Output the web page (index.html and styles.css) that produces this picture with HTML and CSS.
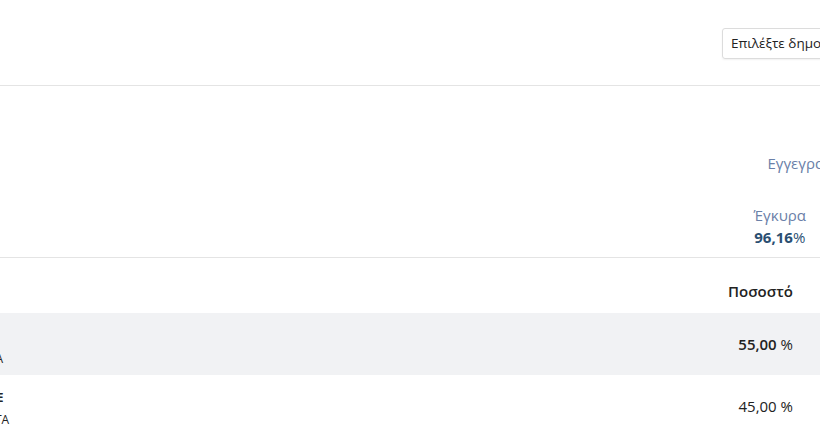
FILE: index.html
```html
<!DOCTYPE html>
<html lang="el">
<head>
<meta charset="utf-8">
<link rel="stylesheet" href="styles.css">
</head>
<body>
<div class="page">
  <header class="topbar">
    <div class="select">Επιλέξτε δημοτική ενότητα</div>
  </header>
  <section class="stats">
    <div class="stat-row first">
      <div class="stat"><span class="label">Εγγεγραμμένοι</span></div>
    </div>
    <div class="stat-row second">
      <div class="stat"><span class="label">Έγκυρα</span><span class="value">96,16<small>%</small></span></div>
    </div>
  </section>
  <table class="results">
    <thead>
      <tr><th class="name"></th><th class="pct">Ποσοστό</th></tr>
    </thead>
    <tbody>
      <tr class="alt">
        <td class="name"><div class="cand one"><span class="sub">ΚΑΤΑ</span></div></td>
        <td class="pct"><b>55,00</b> %</td>
      </tr>
      <tr>
        <td class="name"><div class="cand two"><span class="title">ΝΕ</span><span class="sub">ΚΑΤΑ</span></div></td>
        <td class="pct">45,00 %</td>
      </tr>
    </tbody>
  </table>
</div>
</body>
</html>
```
FILE: styles.css
```css
html, body {
  margin: 0;
  padding: 0;
  background: #ffffff;
  overflow: hidden;
}
body {
  font-family: "Open Sans", "Noto Sans", sans-serif;
  color: #212529;
  width: 820px;
  height: 447px;
}
.page {
  width: 820px;
  overflow: hidden;
}
.topbar {
  height: 86px;
  box-sizing: border-box;
  border-bottom: 1px solid #e4e4e4;
  display: flex;
  justify-content: flex-end;
  align-items: flex-start;
  padding-top: 28px;
}
.select {
  flex: none;
  height: 31px;
  box-sizing: border-box;
  border: 1px solid #dcdcdc;
  border-radius: 3px;
  box-shadow: 0 1px 2px rgba(0,0,0,0.06);
  padding: 0 8px;
  font-size: 13.5px;
  line-height: 29px;
  color: #222;
  white-space: nowrap;
  width: 190px;
  margin-right: -92px;
}
.stats {
  height: 172px;
  box-sizing: border-box;
  border-bottom: 1px solid #e4e4e4;
  display: flex;
  flex-direction: column;
  align-items: flex-end;
  padding-top: 66px;
}
.stat-row {
  display: flex;
  justify-content: flex-end;
}
.stat {
  display: flex;
  flex-direction: column;
  align-items: center;
  font-size: 15px;
  line-height: 22px;
}
.stat .label {
  color: #6a80a8;
}
.stat .value {
  color: #2b4f72;
  font-weight: 700;
}
.stat .value small {
  font-size: 15px;
  font-weight: 400;
}
.first .stat {
  margin-right: -52px;
}
.second {
  margin-top: 30px;
}
.second .stat {
  margin-right: 14px;
}
.results {
  width: 100%;
  border-collapse: collapse;
  font-size: 15px;
}
.results th {
  height: 55px;
  box-sizing: border-box;
  padding: 10px 27px 0 0;
  font-weight: 600;
  text-align: right;
  color: #222;
}
.results td {
  height: 62px;
  box-sizing: border-box;
  padding: 0 27px 0 0;
}
.results tr.alt td {
  background: #f1f2f4;
}
td.pct {
  text-align: right;
  color: #222;
  white-space: nowrap;
}
td.pct b {
  font-weight: 600;
}
td.name {
  padding: 0;
}
.cand {
  display: flex;
  flex-direction: column;
  font-size: 12px;
  line-height: 16px;
}
.cand.one {
  margin-left: -26px;
  padding-top: 24px;
}
.cand.two {
  margin-left: -20px;
  padding-top: 6px;
}
.cand .title {
  font-weight: 700;
  margin-left: 7px;
}
.cand .sub {
  margin-top: 6px;
  color: #222;
}
```
